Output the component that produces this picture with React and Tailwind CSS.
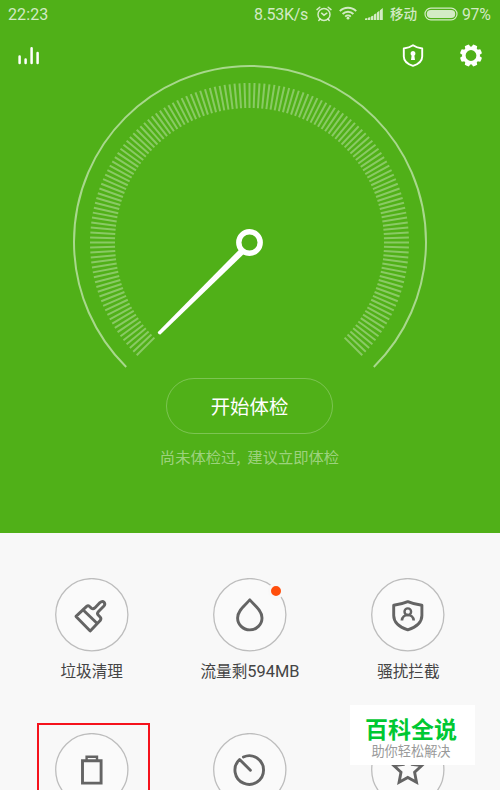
import React from 'react';

const CENTER_X = 249.5;
const CENTER_Y = 176.5;

// 151 ticks spread over the 270 degree dial
const ticks = Array.from({ length: 151 }, (_, i) => -135 + i * 1.8);

function StatusBar() {
  return (
    <div className="flex h-7 items-center pl-2 pr-[9px] pt-px text-[16px] leading-none text-white/75 font-['Roboto','Noto_Sans_CJK_SC',sans-serif]">
      <span className="w-[40px] whitespace-nowrap pt-px tracking-[0.1px]">22:23</span>
      <span className="ml-auto w-[55px] whitespace-nowrap pt-px text-[16px] tracking-[-0.3px]">8.53K/s</span>
      <svg className="-mt-[2px] ml-[7px] h-4 w-4 shrink-0" viewBox="0 0 16 16" fill="none" stroke="currentColor" strokeWidth="1.5" strokeLinecap="round">
        <circle cx="8" cy="8.4" r="6" />
        <path d="M1 3.6 3.8 1.2M15 3.6 12.2 1.2M5.6 7.2 8 9.2l2.8-2M3.8 13.2l-1 1.2M12.2 13.2l1 1.2" />
      </svg>
      <svg className="-mt-[3px] ml-[7px] h-[14px] w-[18px] shrink-0" viewBox="0 0 18 14" fill="none" stroke="currentColor" strokeWidth="1.9">
        <path d="M.8 5.2a11.6 11.6 0 0 1 16.4 0M3.6 8a7.6 7.6 0 0 1 10.8 0M6.2 10.6a4 4 0 0 1 5.6 0" />
        <circle cx="9" cy="12.2" r="1.4" fill="currentColor" stroke="none" />
      </svg>
      <svg className="-mt-px ml-2 h-3 w-[18px] shrink-0" viewBox="0 0 18 12" fill="currentColor">
        <path d="M0 12v-1.5L2.4 10v2zM3 12V9.7l2.4-.6V12zM6 12V8.4l2.4-1V12zM9 12V6.6l2.4-1.3V12zM12 12V4.4l2.4-1.6V12zM15 12V2.2L17.8 0v12z" />
      </svg>
      <span className="ml-[7px] w-[28px] whitespace-nowrap pt-px text-[13.6px] font-medium">移动</span>
      <svg className="-mt-[2px] ml-[6px] h-[14px] w-[34px] shrink-0" viewBox="0 0 34 14">
        <rect x="1" y="1.2" width="32" height="11.6" rx="5.8" fill="none" stroke="currentColor" strokeWidth="1.2" />
        <rect x="2.8" y="3" width="28.4" height="8" rx="4" fill="currentColor" />
      </svg>
      <span className="ml-1 w-[29px] whitespace-nowrap pt-px text-[15.8px] tracking-[-0.3px]">97%</span>
    </div>
  );
}

function Toolbar() {
  return (
    <div className="flex h-[38px] items-start px-[17px] pt-4 text-white">
      <svg className="mt-[2px] h-[20px] w-6" viewBox="0 0 24 20" fill="none" stroke="currentColor" strokeWidth="2.5" strokeLinecap="round">
        <path d="M2.6 10.4v6.6M8.6 13.4v3.6M14.6 2.2v14.8M20.6 7v10" />
      </svg>
      <svg className="ml-auto h-6 w-6" viewBox="0 0 24 24" fill="none" stroke="currentColor" strokeWidth="1.9" strokeLinejoin="round">
        <path d="M12 1.300c2.300 1.600 5.500 2.700 9.200 3.200v7.900c0 4.500-3.800 7.600-9.200 9.400-5.400-1.800-9.200-4.900-9.200-9.400V4.500C6.500 4 9.700 2.900 12 1.300z" />
        <path d="M12 7a2.600 2.600 0 0 0-1.400 4.700L10 16h4l-.6-4.300A2.600 2.600 0 0 0 12 7z" fill="currentColor" stroke="none" />
      </svg>
      <svg className="ml-[34px] h-6 w-6" viewBox="0 0 24 24" fill="currentColor">
        <circle cx="12" cy="11.5" r="7.2" fill="none" stroke="currentColor" strokeWidth="3.6" />
        {[22.5, 67.5, 112.5, 157.5, 202.5, 247.5, 292.5, 337.5].map((a) => (
          <path key={a} d="M9.2 3.5 9.8.6Q12 .2 14.2.6L14.8 3.5z" transform={`rotate(${a} 12 11.5)`} />
        ))}
      </svg>
    </div>
  );
}

function Gauge() {
  return (
    <svg className="block h-[312px] w-[500px] overflow-visible" viewBox="0 0 500 312" fill="none" stroke="white">
      <path d="M126.2 301A176 176 0 1 1 373.8 301" strokeOpacity="0.5" strokeWidth="2" />
      <g strokeOpacity="0.33" strokeWidth="2">
        {ticks.map((a) => (
          <line
            key={a}
            x1={CENTER_X}
            x2={CENTER_X}
            y1={CENTER_Y - 159.5}
            y2={CENTER_Y - 134.5}
            transform={`rotate(${a} ${CENTER_X} ${CENTER_Y})`}
          />
        ))}
      </g>
      <path d="M239.4 183.4 157.9 266Q157.8 268.6 160.4 268.4L243.8 188z" fill="white" stroke="none" />
      <circle cx={CENTER_X} cy={CENTER_Y} r="10.7" strokeWidth="5.4" />
    </svg>
  );
}

function BrushIcon() {
  return (
    <>
      <path d="M-15.8 1.7-5.2-8.3Q-3.7-9.5-2.2-8.2L-.5-6.6Q1.3-5.2 3-6.8L8.2-12.2C11.5-15 14.5-11.2 11.9-8.4L6.7-3.2Q4.8-1.2 6.6.6L8.3 2.4Q9.8 4 8.4 5.8L-1.6 16.2z" />
      <path d="M-8.6-4.7 5.2 8.6" />
    </>
  );
}

function DropIcon() {
  return <path d="M0-14.8C-4-10-12.2-4.8-12.2 3.2A12.2 12 0 0 0 12.2 3.2C12.2-4.8 4-10 0-14.8z" />;
}

function ShieldIcon() {
  return (
    <>
      <path d="M0-13C4-11.3 9-10 14.1-9.4V.8C14.1 7.4 8 12.5 0 15.2-8 12.5-14.1 7.4-14.1.8V-9.4C-9-10-4-11.3 0-13z" />
      <circle cx="0" cy="-3" r="3.3" strokeWidth="2.4" />
      <path d="M-5.9 5.8C-5.7 2.4-3 .3 0 .3S5.7 2.4 5.9 5.8" strokeWidth="2.7" />
    </>
  );
}

function BatteryIcon() {
  return (
    <g strokeLinejoin="miter">
      <path d="M-9.3-9H9.3V13.4H-9.3z" />
      <path d="M-5.2-9.5V-12.9H5.2V-9.5" strokeWidth="2.4" />
    </g>
  );
}

function DialIcon() {
  return <path d="M-6.4-12.7A14.3 14.3 0 1 1-10.2-10.2L.6.5" strokeLinecap="round" />;
}

function StarIcon() {
  return <path d="M0-14.5 4.2-5.4 14-4.2 6.8 2.6 8.7 12.6 0 7.8-8.7 12.6-6.8 2.6-14-4.2-4.2-5.4z" strokeLinejoin="miter" />;
}

const items = [
  { label: '垃圾清理', Icon: BrushIcon },
  { label: '流量剩', suffix: '594MB', Icon: DropIcon, badge: true },
  { label: '骚扰拦截', Icon: ShieldIcon },
  { label: '', Icon: BatteryIcon },
  { label: '', Icon: DialIcon },
  { label: '', Icon: StarIcon },
];

function Tile({ label, suffix, Icon, badge }) {
  return (
    <div className="flex h-[155px] flex-col items-center">
      <div className="relative">
        <svg className="block h-[74px] w-[74px]" viewBox="-36.8 -36.7 74 74" fill="none">
          <circle r="36.1" fill="#fafafa" stroke="#bdbdbd" strokeWidth="1.3" />
          <g stroke="#646464" strokeWidth="2.9" strokeLinejoin="round">
            <Icon />
          </g>
        </svg>
        {badge && (
          <span className="absolute left-[55px] top-[5px] h-4 w-4 rounded-full border-[3px] border-[#f8f8f8] bg-[#ff4e0c]" />
        )}
      </div>
      <span className="mt-[6px] whitespace-nowrap text-[15.6px] leading-6 text-[#444]">
        {label}
        {suffix && <span className="text-[16.4px] font-['Roboto',sans-serif]">{suffix}</span>}
      </span>
    </div>
  );
}

export default function App() {
  return (
    <div className="relative h-[790px] w-[500px] overflow-hidden bg-[#f8f8f8] font-['Noto_Sans_CJK_SC',sans-serif]">
      <div className="flex h-[533px] flex-col bg-[#50b018]">
        <StatusBar />
        <Toolbar />
        <Gauge />
        <div className="flex flex-col items-center pr-px">
          <button className="h-14 w-[167px] rounded-full border border-white/25 text-[19.4px] leading-none text-white">
            开始体检
          </button>
          <p className="mt-[10px] whitespace-nowrap text-[15.3px] leading-6 text-white/45">
            尚未体检过<span className="inline-block w-[11px]">,</span>建议立即体检
          </p>
        </div>
      </div>

      <div className="grid grid-cols-3 px-[12.5px] pt-[45px]">
        {items.map((item, i) => (
          <Tile key={i} {...item} />
        ))}
      </div>

      {/* highlight around the battery entry */}
      <div className="absolute left-[37px] top-[723px] h-[90px] w-[113px] border-2 border-[#f5121c]" />

      <div className="absolute left-[350px] top-[705px] flex h-[60px] w-[125px] flex-col items-center bg-white pr-[3px]">
        <span className="mt-[12px] whitespace-nowrap text-[23px] font-bold leading-[23px] text-[#00c832]">百科全说</span>
        <span className="mt-[4px] whitespace-nowrap text-[13.2px] leading-[14px] text-[#999]">助你轻松解决</span>
      </div>
    </div>
  );
}
